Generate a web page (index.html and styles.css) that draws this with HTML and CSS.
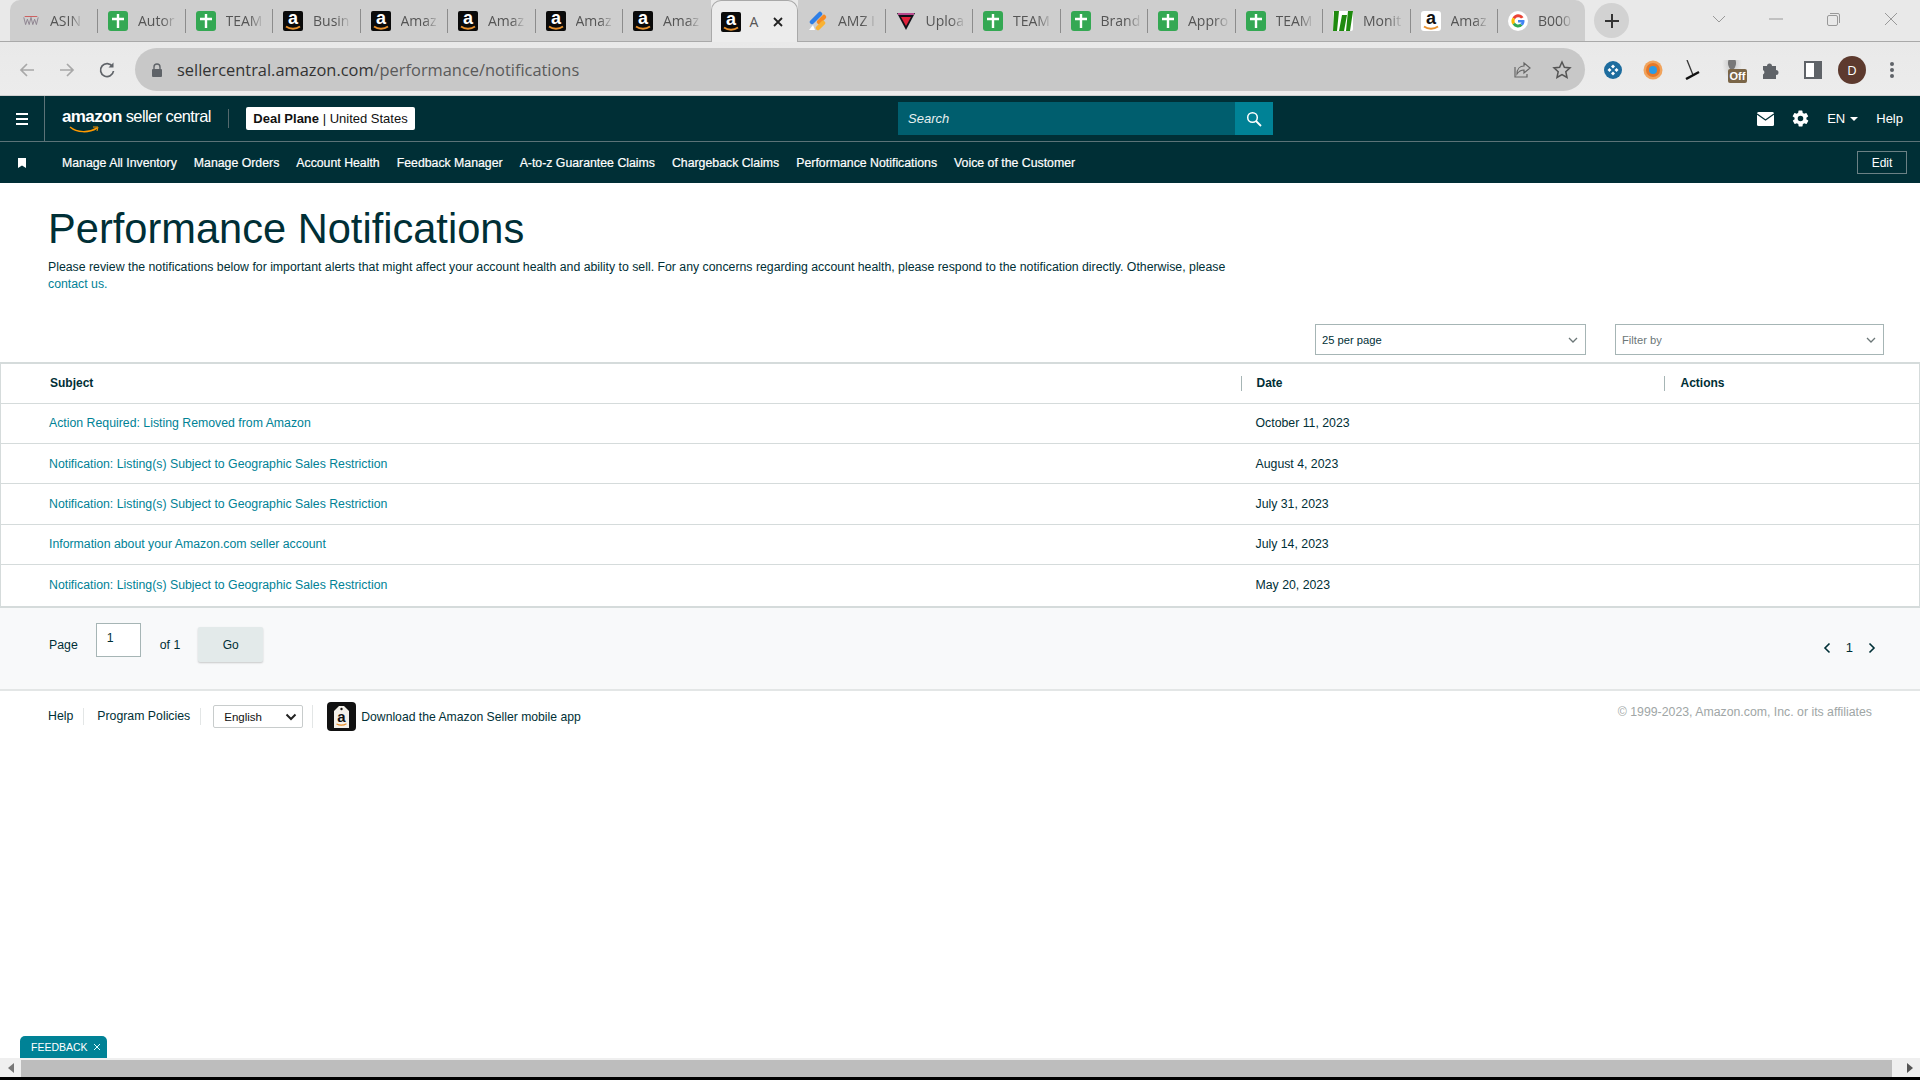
FILE: index.html
```html
<!DOCTYPE html>
<html lang="en">
<head>
  <meta charset="UTF-8" />
  <title>Performance Notifications</title>
  <link rel="stylesheet" href="styles.css">
</head>
<body>
  <svg class="sprite" width="0" height="0">
    <symbol id="fav-plus" viewBox="0 0 20 20">
      <rect width="20" height="20" rx="3" fill="#34a853" />
      <path d="M10 3v14M4 8h12" stroke="#fff" stroke-width="2.4" fill="none" />
    </symbol>
    <symbol id="fav-amz" viewBox="0 0 20 20">
      <rect width="20" height="20" rx="2" fill="#0a0a0a" />
      <text x="10" y="13" text-anchor="middle" class="fav-a">a</text>
      <path d="M3 15.500c4 3 10 3 14 0" stroke="#e8912d" stroke-width="1.800" fill="none" />
    </symbol>
    <symbol id="fav-amz-w" viewBox="0 0 20 20">
      <rect width="20" height="20" rx="3" fill="#fff" />
      <text x="10" y="13" text-anchor="middle" class="fav-a fav-a-dark">a</text>
      <path d="M3 15.500c4 3 10 3 14 0" stroke="#e8912d" stroke-width="1.800" fill="none" />
    </symbol>
  </svg>

  <!-- browser tabs -->
  <div class="tabstrip">
    <div class="tab first">
      <svg class="fav" viewBox="0 0 20 20"><path d="M2 6l2 8 2-6 2 6 2-8M10 6l2 8 2-6 2 6 2-8" stroke="#8a7f8c" fill="none" /><path d="M3 5h14" stroke="#c55" /></svg>
      <span class="tab-title">ASIN</span>
    </div>
    <div class="tab"><svg class="fav"><use href="#fav-plus" /></svg><span class="tab-title">Autor</span></div>
    <div class="tab"><svg class="fav"><use href="#fav-plus" /></svg><span class="tab-title">TEAM</span></div>
    <div class="tab"><svg class="fav"><use href="#fav-amz" /></svg><span class="tab-title">Busin</span></div>
    <div class="tab"><svg class="fav"><use href="#fav-amz" /></svg><span class="tab-title">Amaz</span></div>
    <div class="tab"><svg class="fav"><use href="#fav-amz" /></svg><span class="tab-title">Amaz</span></div>
    <div class="tab"><svg class="fav"><use href="#fav-amz" /></svg><span class="tab-title">Amaz</span></div>
    <div class="tab before-active"><svg class="fav"><use href="#fav-amz" /></svg><span class="tab-title">Amaz</span></div>
    <div class="tab active">
      <svg class="fav"><use href="#fav-amz" /></svg>
      <span class="tab-title">A</span>
      <svg class="tab-close" viewBox="0 0 12 12"><path d="M2 2l8 8M10 2l-8 8" stroke="#222" stroke-width="1.8" /></svg>
    </div>
    <div class="tab">
      <svg class="fav" viewBox="0 0 20 20"><path d="M4 11l8-8" stroke="#2f7fe6" stroke-width="4.500" stroke-linecap="round" /><path d="M11 11l5-5" stroke="#f58a25" stroke-width="4.500" stroke-linecap="round" /><path d="M10 17l5-5" stroke="#f9b233" stroke-width="4.500" stroke-linecap="round" /><path d="M1 19l4-5 2 5z" fill="#fff" /></svg>
      <span class="tab-title">AMZ I</span>
    </div>
    <div class="tab">
      <svg class="fav" viewBox="0 0 20 20"><path d="M1 2h18L10 19z" fill="#101018" /><path d="M5 6h10l-5 9z" fill="#e0203a" /><path d="M2 2h16v2H2z" fill="#b94a8e" /></svg>
      <span class="tab-title">Uploa</span>
    </div>
    <div class="tab"><svg class="fav"><use href="#fav-plus" /></svg><span class="tab-title">TEAM</span></div>
    <div class="tab"><svg class="fav"><use href="#fav-plus" /></svg><span class="tab-title">Brand</span></div>
    <div class="tab"><svg class="fav"><use href="#fav-plus" /></svg><span class="tab-title">Appro</span></div>
    <div class="tab"><svg class="fav"><use href="#fav-plus" /></svg><span class="tab-title">TEAM</span></div>
    <div class="tab">
      <svg class="fav" viewBox="0 0 20 20"><rect width="20" height="20" rx="2" fill="#fff" /><path d="M1 0h5L4 20H0zM9 4h5l-3 16H6zM15 0h5l-3 20h-4z" fill="#1f8a0f" /></svg>
      <span class="tab-title">Monit</span>
    </div>
    <div class="tab"><svg class="fav"><use href="#fav-amz-w" /></svg><span class="tab-title">Amaz</span></div>
    <div class="tab">
      <svg class="fav" viewBox="0 0 20 20">
        <circle cx="10" cy="10" r="10" fill="#fff" />
        <path d="M15.500 6.200A6.500 6.500 0 0 0 4.600 6.400L7 8.200a3.600 3.600 0 0 1 6-.6z" fill="#ea4335" />
        <path d="M4.600 6.400a6.500 6.500 0 0 0 0 7.200L7 11.800a3.600 3.600 0 0 1 0-3.600z" fill="#fbbc05" />
        <path d="M4.600 13.600a6.500 6.500 0 0 0 10 .9l-2.300-1.800A3.600 3.600 0 0 1 7 11.800z" fill="#34a853" />
        <path d="M16.400 9H10v2.600h3.600a3 3 0 0 1-1.300 1.100l2.300 1.800c1.500-1.300 2.200-3.200 1.800-5.500z" fill="#4285f4" />
      </svg>
      <span class="tab-title">B000</span>
    </div>
    <button class="newtab"><svg viewBox="0 0 16 16" width="16" height="16"><path d="M8 1v14M1 8h14" stroke="#333" stroke-width="2" /></svg></button>
    <div class="winctl">
      <svg width="14" height="8" viewBox="0 0 14 8"><path d="M1 1l6 6 6-6" stroke="#999" fill="none" /></svg>
      <svg class="wc-min" width="14" height="2" viewBox="0 0 14 2"><path d="M0 1h14" stroke="#999" /></svg>
      <svg class="wc-max" width="13" height="13" viewBox="0 0 13 13"><rect x="0.500" y="2.500" width="10" height="10" rx="1.500" fill="none" stroke="#999" /><path d="M3 .5h8a1.500 1.500 0 0 1 1.500 1.500v8" fill="none" stroke="#999" /></svg>
      <svg class="wc-close" width="14" height="14" viewBox="0 0 14 14"><path d="M1 1l12 12M13 1L1 13" stroke="#999" /></svg>
    </div>
  </div>

  <!-- browser toolbar -->
  <div class="toolbar">
    <svg class="tb-ico" viewBox="0 0 18 18"><path d="M16 9H3M9 3L3 9l6 6" stroke="#a8a8a8" stroke-width="1.700" fill="none" /></svg>
    <svg class="tb-ico" viewBox="0 0 18 18"><path d="M2 9h13M9 3l6 6-6 6" stroke="#a8a8a8" stroke-width="1.700" fill="none" /></svg>
    <svg class="tb-ico" viewBox="0 0 18 18"><path d="M14.500 5.500A6.500 6.500 0 1 0 15.500 10" stroke="#5f6368" stroke-width="1.700" fill="none" /><path d="M15.500 1.500v5h-5z" fill="#5f6368" /></svg>
    <div class="omnibox">
      <svg class="lock" viewBox="0 0 12 14" width="12" height="14"><path d="M3 6V4a3 3 0 0 1 6 0v2" stroke="#5f6368" stroke-width="1.400" fill="none" /><rect x="1" y="6" width="10" height="8" rx="1" fill="#5f6368" /></svg>
      <span class="url">sellercentral.amazon.com<span class="url-path">/performance/notifications</span></span>
      <svg class="omni-ico" viewBox="0 0 20 20"><path d="M12 3l6 5-6 5v-3c-3 0-5 1-7 4 0-5 3-8 7-8z M3 7v10h12v-3" stroke="#666" stroke-width="1.200" fill="none" /></svg>
      <svg class="omni-ico" viewBox="0 0 20 20"><path d="M10 2l2.400 5.300 5.600.6-4.200 3.800 1.200 5.700L10 14.500l-5 2.900 1.200-5.700L2 7.900l5.600-.6z" stroke="#555" stroke-width="1.500" fill="none" /></svg>
    </div>
    <div class="extensions">
      <svg class="ext" viewBox="0 0 20 20"><circle cx="10" cy="10" r="9" fill="#1d6c9e" /><path d="M10 4.500l2 2-2 2-2-2zM10 11.500l2 2-2 2-2-2zM6.500 8l2 2-2 2-2-2zM13.500 8l2 2-2 2-2-2z" fill="#fff" /></svg>
      <svg class="ext" viewBox="0 0 20 20"><circle cx="10" cy="10" r="9.500" fill="#f0a35c" /><circle cx="10" cy="10" r="7" fill="#e6782a" /><circle cx="10" cy="10" r="4" fill="#2c9be6" /></svg>
      <svg class="ext" viewBox="0 0 20 20"><path d="M5 0l6 15" stroke="#333" stroke-width="1.300" /><path d="M4 19l13-7" stroke="#111" stroke-width="2.500" /></svg>
      <div class="ext ext-off"><span class="off-badge">Off</span></div>
      <svg class="ext" viewBox="0 0 20 20"><path d="M2 6h4a2.500 2.500 0 1 1 5 0h4v4a2.500 2.500 0 1 1 0 5v4H2v-4.500a2.500 2.500 0 0 0 0-4.500z" fill="#5f6368" /></svg>
      <svg class="ext side-panel" viewBox="0 0 20 20"><rect x="2" y="2" width="16" height="16" fill="#fff" stroke="#5f6368" stroke-width="2" /><rect x="11" y="2" width="7" height="16" fill="#5f6368" /></svg>
      <div class="avatar">D</div>
      <svg class="ext" viewBox="0 0 20 20"><g fill="#5f6368"><circle cx="10" cy="4" r="2" /><circle cx="10" cy="10" r="2" /><circle cx="10" cy="16" r="2" /></g></svg>
    </div>
  </div>

  <!-- seller central header -->
  <header class="sc-header">
    <div class="sc-top">
      <div class="burger"><span></span><span></span><span></span></div>
      <div class="logo">
        <span class="logo-amazon">amazon</span>
        <span class="logo-seller">seller central</span>
        <svg class="logo-smile" viewBox="0 0 30 8" width="30" height="8"><path d="M1 1c7 6 19 6 27 1" stroke="#f90" stroke-width="1.500" fill="none" /><path d="M24 1l5 0-1 4" stroke="#f90" fill="none" /></svg>
      </div>
      <div class="account-badge"><b>Deal Plane</b> | United States</div>
      <div class="search">
        <span class="search-input">Search</span>
        <span class="search-btn"><svg viewBox="0 0 16 16" width="16" height="16"><circle cx="6.500" cy="6.500" r="4.800" stroke="#fff" stroke-width="1.500" fill="none" /><path d="M10 10l5 5" stroke="#fff" stroke-width="1.800" /></svg></span>
      </div>
      <div class="top-right">
        <svg width="17" height="14" viewBox="0 0 17 14"><rect width="17" height="14" rx="1.500" fill="#fff" /><path d="M0 2l8.500 6L17 2" stroke="#002f36" stroke-width="1.300" fill="none" /></svg>
        <svg class="gear" width="19" height="19" viewBox="0 0 24 24"><path fill="#fff" d="M19.400 13c.1-.3.100-.7.100-1s0-.7-.1-1l2.100-1.600c.2-.2.200-.4.100-.6l-2-3.500c-.1-.2-.4-.3-.6-.2l-2.500 1c-.5-.4-1.100-.7-1.700-1l-.4-2.600c0-.2-.3-.5-.5-.5h-4c-.2 0-.5.300-.5.500l-.4 2.600c-.6.300-1.200.6-1.700 1l-2.500-1c-.2-.1-.5 0-.6.200l-2 3.500c-.1.200-.1.400.1.600L4.600 11c-.1.300-.1.700-.1 1s0 .7.100 1l-2.100 1.600c-.2.2-.2.400-.1.600l2 3.500c.1.200.4.300.6.200l2.500-1c.5.400 1.100.7 1.700 1l.4 2.600c0 .2.300.5.500.5h4c.2 0 .5-.3.500-.5l.4-2.600c.6-.3 1.200-.6 1.700-1l2.500 1c.2.100.5 0 .6-.2l2-3.500c.1-.2.100-.4-.1-.6zM12 15.500a3.500 3.500 0 1 1 0-7 3.500 3.500 0 0 1 0 7z" /></svg>
        <span class="lang">EN<i class="caret"></i></span>
        <span class="help">Help</span>
      </div>
    </div>
    <nav class="sc-nav">
      <svg class="bookmark" width="8" height="10" viewBox="0 0 8 10"><path d="M0 0h8v10L4 7.500 0 10z" fill="#fff" /></svg>
      <a>Manage All Inventory</a>
      <a>Manage Orders</a>
      <a>Account Health</a>
      <a>Feedback Manager</a>
      <a>A-to-z Guarantee Claims</a>
      <a>Chargeback Claims</a>
      <a>Performance Notifications</a>
      <a>Voice of the Customer</a>
      <button class="edit-btn">Edit</button>
    </nav>
  </header>

  <main class="page">
    <h1>Performance Notifications</h1>
    <p class="intro">Please review the notifications below for important alerts that might affect your account health and ability to sell. For any concerns regarding account health, please respond to the notification directly. Otherwise, please <a class="link">contact us.</a></p>

    <div class="filters">
      <div class="fake-select wide">25 per page<svg width="10" height="6" viewBox="0 0 10 6"><path d="M1 1l4 4 4-4" stroke="#6c7778" stroke-width="1.300" fill="none" /></svg></div>
      <div class="fake-select placeholder">Filter by<svg width="10" height="6" viewBox="0 0 10 6"><path d="M1 1l4 4 4-4" stroke="#6c7778" stroke-width="1.300" fill="none" /></svg></div>
    </div>

    <table class="notif-table">
      <thead>
        <tr><th class="col-subject">Subject</th><th class="col-date"><span>Date</span></th><th class="col-actions"><span>Actions</span></th></tr>
      </thead>
      <tbody>
        <tr><td><a class="link">Action Required: Listing Removed from Amazon</a></td><td>October 11, 2023</td><td></td></tr>
        <tr><td><a class="link">Notification: Listing(s) Subject to Geographic Sales Restriction</a></td><td>August 4, 2023</td><td></td></tr>
        <tr><td><a class="link">Notification: Listing(s) Subject to Geographic Sales Restriction</a></td><td>July 31, 2023</td><td></td></tr>
        <tr><td><a class="link">Information about your Amazon.com seller account</a></td><td>July 14, 2023</td><td></td></tr>
        <tr><td><a class="link">Notification: Listing(s) Subject to Geographic Sales Restriction</a></td><td>May 20, 2023</td><td></td></tr>
      </tbody>
    </table>

    <div class="pager">
      <span>Page</span>
      <div class="page-input">1</div>
      <span class="of">of 1</span>
      <button class="go-btn">Go</button>
      <div class="pager-nav">
        <svg width="8" height="12" viewBox="0 0 8 12"><path d="M6.500 1.500L2 6l4.500 4.500" stroke="#002f36" stroke-width="1.600" fill="none" /></svg>
        <span>1</span>
        <svg width="8" height="12" viewBox="0 0 8 12"><path d="M1.500 1.500L6 6l-4.500 4.500" stroke="#002f36" stroke-width="1.600" fill="none" /></svg>
      </div>
    </div>

    <footer class="sc-footer">
      <a class="foot-link">Help</a>
      <a class="foot-link links-end">Program Policies</a>
      <div class="lang-wrap">
        <div class="lang-select">English<svg width="12" height="8" viewBox="0 0 12 8"><path d="M1.500 1.500L6 6l4.500-4.500" stroke="#222" stroke-width="2" fill="none" /></svg></div>
      </div>
      <div class="app-link">
        <svg class="app-ico" width="29" height="29" viewBox="0 0 29 29">
          <rect width="29" height="29" rx="4" fill="#111" />
          <path d="M7 9l5-5h5l5 5v17H7z" fill="#f4f1ea" />
          <circle cx="14.500" cy="7" r="1.200" fill="#111" />
          <text x="14.500" y="20" text-anchor="middle" class="tag-a">a</text>
          <path d="M9.500 22c3 1.500 7 1.500 10-.3" stroke="#e8912d" stroke-width="1.200" fill="none" />
        </svg>
        <span>Download the Amazon Seller mobile app</span>
      </div>
      <span class="copyright">© 1999-2023, Amazon.com, Inc. or its affiliates</span>
    </footer>
  </main>

  <div class="hscroll">
    <svg width="6" height="10" viewBox="0 0 6 10"><path d="M6 0v10L0 5z" fill="#777" /></svg>
    <div class="hscroll-thumb"></div>
    <svg class="hscroll-right" width="6" height="10" viewBox="0 0 6 10"><path d="M0 0v10l6-5z" fill="#555" /></svg>
  </div>
  <div class="screen-edge"></div>

  <div class="feedback">FEEDBACK <svg class="feedback-x" width="8" height="8" viewBox="0 0 8 8"><path d="M1 1l6 6M7 1L1 7" stroke="#dff" stroke-width="1" /></svg></div>
</body>
</html>
```

FILE: styles.css
```css
* {
  box-sizing: border-box;
}
html, body {
  height: 100%;
}
body {
  margin: 0;
  display: flex;
  flex-direction: column;
  height: 1080px;
  overflow: hidden;
  background: #fff;
  font-family: "Liberation Sans", Arial, sans-serif;
  font-size: 12.3px;
  color: #002f36;
}
.sprite {
  display: none;
}
.fav-a {
  font-family: "Liberation Sans", sans-serif;
  font-size: 18px;
  font-weight: bold;
  fill: #fff;
}
.fav-a-dark {
  fill: #111;
}

/* tab strip */
.tabstrip {
  display: flex;
  height: 42px;
  padding-left: 10px;
  background: #e9e9e9;
  border-bottom: 1px solid #a9a9a9;
  flex-shrink: 0;
}
.tab {
  position: relative;
  display: flex;
  align-items: center;
  width: 87.5px;
  height: 41px;
  padding: 0 8px 0 10px;
  gap: 10px;
  background: #cecece;
  font-family: "Open Sans", sans-serif;
  font-size: 14px;
  color: #555;
}
.tab::after {
  content: "";
  position: absolute;
  right: 0;
  top: 9px;
  bottom: 8px;
  width: 1px;
  background: #8c8c8c;
}
.tab.first {
  border-top-left-radius: 10px;
  padding-left: 12px;
  width: 88px;
}
.tab.first .fav {
  width: 18px;
  height: 18px;
}
.tab.before-active::after,
.tab.active::after {
  display: none;
}
.tab.active {
  background: #ececec;
  border-radius: 10px 10px 0 0;
  height: 42px;
  padding: 0 13px 0 9px;
  gap: 9px;
  border: 1px solid #a9a9a9;
  border-bottom: none;
}
.tab:nth-last-child(3) {
  border-top-right-radius: 10px;
  width: 87px;
}
.tab:nth-last-child(3)::after {
  display: none;
}
.fav {
  width: 20px;
  height: 20px;
  flex-shrink: 0;
}
.tab-title {
  white-space: nowrap;
  -webkit-mask-image: linear-gradient(90deg, #000 65%, rgba(0,0,0,0.15));
  mask-image: linear-gradient(90deg, #000 65%, rgba(0,0,0,0.15));
}
.tab.active .tab-title {
  -webkit-mask-image: none;
  mask-image: none;
}
.tab-close {
  width: 12px;
  height: 12px;
  margin-left: auto;
  flex-shrink: 0;
}
.newtab {
  width: 35px;
  height: 35px;
  margin: 3px 0 0 9px;
  padding: 0;
  display: flex;
  align-items: center;
  justify-content: center;
  border: none;
  border-radius: 50%;
  background: #d2d2d2;
}
.winctl {
  display: flex;
  align-items: center;
  margin-left: 83px;
  height: 38px;
}
.wc-min {
  margin-left: 43px;
}
.wc-max {
  margin-left: 44px;
}
.wc-close {
  margin-left: 44px;
}

/* toolbar */
.toolbar {
  display: flex;
  align-items: center;
  height: 54px;
  padding: 2px 0 0 18px;
  background: linear-gradient(#e9e9e9, #ececec);
  border-bottom: 1px solid #d0d0d0;
  flex-shrink: 0;
}
.tb-ico {
  width: 18px;
  height: 18px;
  margin-right: 22px;
}
.toolbar .tb-ico:nth-child(3) {
  margin-right: 19px;
}
.omnibox {
  display: flex;
  align-items: center;
  width: 1450px;
  height: 43px;
  padding: 0 13px 0 16px;
  border-radius: 22px;
  background: #c8c8c8;
}
.lock {
  margin-right: 14px;
}
.url {
  flex: 1;
  font-family: "Open Sans", sans-serif;
  font-size: 16.400px;
  color: #333;
}
.url-path {
  color: #5a5a5a;
}
.omni-ico {
  width: 20px;
  height: 20px;
  margin-left: 20px;
}
.extensions {
  display: flex;
  align-items: center;
  gap: 19.500px;
  margin-left: 18px;
}
.ext {
  width: 20px;
  height: 20px;
  flex-shrink: 0;
}
.side-panel {
  margin-left: 2px;
}
.ext-off {
  position: relative;
  background: radial-gradient(ellipse at 50% 15%, #777 25%, #d4d4d4 30%, transparent 70%);
}
.off-badge {
  position: absolute;
  left: 6px;
  top: 9px;
  padding: 0 2px;
  border-radius: 2px;
  background: #7a6547;
  color: #fff;
  font-size: 11px;
  font-weight: bold;
  line-height: 14px;
}
.avatar {
  width: 28px;
  height: 28px;
  margin: 0 -4px;
  border-radius: 50%;
  background: #5d3a2e;
  color: #fff;
  font-family: "Open Sans", sans-serif;
  font-size: 13px;
  line-height: 28px;
  text-align: center;
}

/* seller central header */
.sc-header {
  flex-shrink: 0;
  background: #002f36;
  color: #fff;
}
.sc-top {
  display: flex;
  align-items: center;
  height: 46px;
  border-bottom: 1px solid #5c7378;
}
.burger {
  display: flex;
  flex-direction: column;
  justify-content: center;
  gap: 3px;
  width: 45px;
  height: 45px;
  padding: 0 16px;
  border-right: 1px solid #5c7378;
}
.burger span {
  height: 2px;
  background: #fff;
}
.logo {
  position: relative;
  display: flex;
  align-items: baseline;
  gap: 4px;
  width: 184px;
  height: 45px;
  padding: 11px 0 0 17px;
  white-space: nowrap;
  letter-spacing: -0.6px;
}
.logo::after {
  content: "";
  position: absolute;
  right: 0;
  top: 13px;
  bottom: 13px;
  width: 1px;
  background: #54696d;
}
.logo-amazon {
  font-size: 17px;
  font-weight: bold;
}
.logo-seller {
  font-size: 16.500px;
}
.logo-smile {
  position: absolute;
  left: 24px;
  top: 30px;
}
.account-badge {
  width: 169px;
  height: 23px;
  margin-left: 17px;
  border-radius: 2px;
  background: #fff;
  color: #111;
  font-size: 13px;
  line-height: 23px;
  text-align: center;
  white-space: nowrap;
}
.search {
  display: flex;
  width: 375px;
  height: 33px;
  margin-left: 483px;
}
.search-input {
  flex: 1;
  padding-left: 10px;
  background: #005e6e;
  color: #e8f0f0;
  font-size: 13px;
  font-style: italic;
  line-height: 33px;
}
.search-btn {
  display: flex;
  align-items: center;
  justify-content: center;
  width: 38px;
  background: #008296;
}
.top-right {
  display: flex;
  align-items: center;
  margin-left: auto;
  padding-right: 17px;
  font-size: 13px;
}
.gear {
  margin-left: 17px;
}
.lang {
  margin-left: 17px;
}
.caret {
  display: inline-block;
  margin-left: 5px;
  vertical-align: 2px;
  border-style: solid;
  border-width: 4px 4px 0;
  border-color: #fff transparent transparent;
}
.help {
  margin-left: 18px;
}
.sc-nav {
  display: flex;
  align-items: center;
  gap: 17px;
  height: 41px;
  padding: 0 13px 0 18px;
}
.sc-nav a {
  font-size: 12.300px;
  white-space: nowrap;
  -webkit-text-stroke: 0.2px #fff;
}
.bookmark {
  margin-right: 19px;
}
.edit-btn {
  margin-left: auto;
  width: 50px;
  height: 23px;
  padding: 0;
  border: 1px solid #6b8185;
  background: transparent;
  color: #fff;
  font-family: inherit;
  font-size: 12px;
}

/* main */
.page {
  flex: 1;
  min-height: 0;
}
h1 {
  margin: 0;
  padding: 20px 48px 0;
  font-size: 41.600px;
  font-weight: normal;
  line-height: 52px;
  color: #002f36;
}
.intro {
  width: 1240px;
  margin: 0;
  padding: 4px 0 0 48px;
  line-height: 17px;
  color: #002f36;
}
.link {
  color: #008296;
}
.filters {
  display: flex;
  justify-content: flex-end;
  gap: 29px;
  margin-top: 31px;
  padding-right: 36px;
}
.fake-select {
  display: flex;
  align-items: center;
  justify-content: space-between;
  width: 269px;
  height: 31px;
  padding: 0 7px 0 6px;
  border: 1px solid #a6b5b5;
  font-size: 11.200px;
  color: #002f36;
}
.fake-select.wide {
  width: 271px;
}
.fake-select.placeholder {
  color: #6c7778;
}
.notif-table {
  width: 100%;
  margin-top: 7px;
  border-collapse: collapse;
  border: 2px solid #d5dbdb;
  border-width: 2px 1px;
  table-layout: fixed;
}
.notif-table tr {
  border-bottom: 1px solid #d5dbdb;
}
.notif-table tbody tr:last-child {
  border-bottom: none;
}
.notif-table th {
  height: 40px;
  padding: 0;
  font-size: 12px;
  font-weight: bold;
  line-height: 15px;
  text-align: left;
}
.col-subject {
  width: 1240px;
  padding-left: 49px !important;
}
.col-date {
  width: 423px;
}
.notif-table th span {
  display: block;
  height: 15px;
  padding-left: 15px;
  border-left: 1px solid #a6b5b5;
}
.col-actions span {
  padding-left: 16px !important;
}
.notif-table td {
  height: 40.500px;
  padding: 0 0 0 15px;
}
.notif-table tbody tr:nth-child(even) td {
  height: 40px;
}
.notif-table td:first-child {
  padding-left: 48px;
}
.notif-table tbody tr:last-child td {
  height: 43px;
}
.pager {
  display: flex;
  align-items: center;
  height: 83px;
  padding: 0 44px 8px 49px;
  background: #f8f9fa;
  border-bottom: 2px solid #e3e6e6;
}
.page-input {
  width: 45px;
  height: 34px;
  margin: -10px 0 0 18px;
  padding: 7px 0 0 10px;
  border: 1px solid #a6b5b5;
  background: #fff;
}
.of {
  margin-left: 19px;
}
.go-btn {
  width: 65px;
  height: 35px;
  margin-left: 18px;
  padding: 0;
  border: none;
  border-radius: 2px;
  background: #e3eaea;
  box-shadow: 0 1px 2px rgba(0,0,0,0.2);
  color: #002f36;
  font-family: inherit;
  font-size: 12px;
}
.pager-nav {
  display: flex;
  align-items: center;
  gap: 15px;
  margin-left: auto;
  padding-top: 6px;
  font-size: 13px;
}
.sc-footer {
  display: flex;
  align-items: center;
  height: 51px;
  padding: 0 36px 0 48px;
}
.foot-link {
  padding-right: 10px;
  margin-right: 13px;
  border-right: 1px solid #e3e6e6;
  line-height: 17px;
}
.foot-link.links-end {
  margin-right: 12px;
}
.lang-wrap {
  padding-right: 9px;
  margin-right: 14px;
  border-right: 1px solid #e3e6e6;
}
.lang-select {
  display: flex;
  align-items: center;
  justify-content: space-between;
  width: 90px;
  height: 23px;
  padding: 0 5px 0 10px;
  border: 1px solid #c8cccc;
  border-radius: 2px;
  font-size: 11.500px;
  color: #111;
}
.app-link {
  display: flex;
  align-items: center;
  gap: 5px;
  font-size: 12.200px;
}
.tag-a {
  font-family: "Liberation Sans", sans-serif;
  font-size: 15px;
  font-weight: bold;
  fill: #111;
}
.copyright {
  margin: -10px 12px 0 auto;
  color: #a0a6a6;
}

/* bottom scrollbar */
.hscroll {
  display: flex;
  align-items: center;
  flex-shrink: 0;
  height: 19px;
  padding-left: 8px;
  background: #efefef;
}
.hscroll-thumb {
  width: 1871px;
  height: 17px;
  margin: 2px 0 0 7px;
  background: #bdbdbd;
}
.hscroll-right {
  margin-left: 15px;
}
.screen-edge {
  flex-shrink: 0;
  height: 3px;
  background: #000;
}
.feedback {
  position: absolute;
  left: 20px;
  top: 1036px;
  width: 87px;
  height: 22px;
  padding-left: 11px;
  border-radius: 5px 5px 0 0;
  background: #008296;
  color: #fff;
  font-size: 10.500px;
  line-height: 23px;
}
.feedback-x {
  margin-left: 2px;
}
```
